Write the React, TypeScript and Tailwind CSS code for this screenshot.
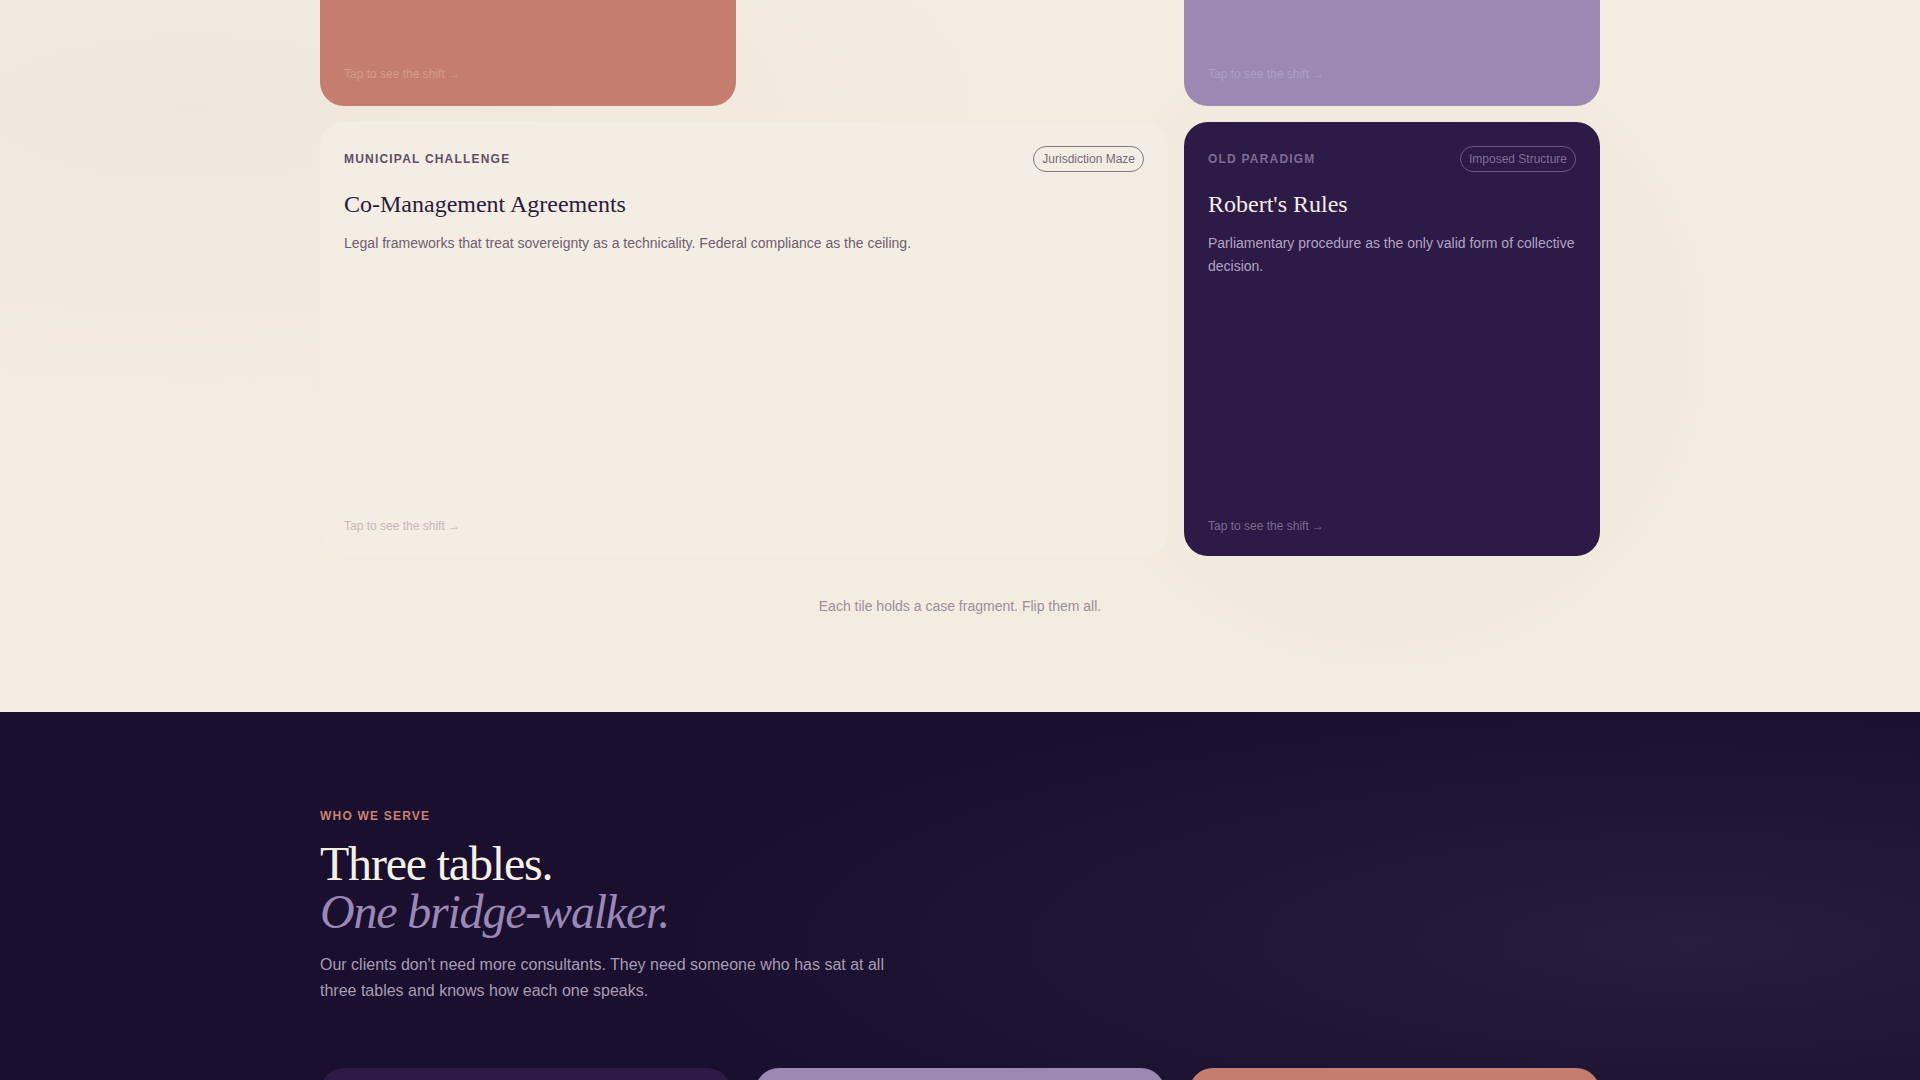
import React from "react";

const serif = { fontFamily: '"Liberation Serif", "Times New Roman", serif' };

type Tile = {
  label: string;
  tag: string;
  title: string;
  body: string;
};

const municipal: Tile = {
  label: "Municipal Challenge",
  tag: "Jurisdiction Maze",
  title: "Co-Management Agreements",
  body: "Legal frameworks that treat sovereignty as a technicality. Federal compliance as the ceiling.",
};

const oldParadigm: Tile = {
  label: "Old Paradigm",
  tag: "Imposed Structure",
  title: "Robert's Rules",
  body: "Parliamentary procedure as the only valid form of collective decision.",
};

function TapHint({ className }: { className: string }) {
  return <span className={`text-xs leading-4 ${className}`}>Tap to see the shift →</span>;
}

function TileCard({ tile, dark, className }: { tile: Tile; dark?: boolean; className?: string }) {
  return (
    <div
      className={`flex h-[434px] flex-col rounded-3xl px-6 pt-6 pb-[19px] ${
        dark ? "bg-[#2d1a46]" : "bg-[#f4ede3] shadow-[0_0_0_1px_#f2eadf]"
      } ${className ?? ""}`}
    >
      <div className="flex items-center justify-between">
        <span
          className={`text-xs font-bold uppercase tracking-widest ${
            dark ? "text-[#7e6d94]" : "text-[#5c4f66]"
          }`}
        >
          {tile.label}
        </span>
        <span
          className={`rounded-full border px-2 py-1 text-xs leading-4 ${
            dark ? "border-[#6a5882] text-[#7f6f95]" : "border-[#857884] text-[#76697a]"
          }`}
        >
          {tile.tag}
        </span>
      </div>
      <h3
        style={serif}
        className={`mt-4 text-2xl leading-8 ${dark ? "text-[#f4ede3]" : "text-[#2a1c3b]"}`}
      >
        {tile.title}
      </h3>
      <p
        className={`mt-3 text-sm leading-relaxed ${
          dark ? "text-[#b2a4c4]" : "text-[#6c6070]"
        }`}
      >
        {tile.body}
      </p>
      <div className="mt-auto">
        <TapHint className={dark ? "text-[#7b6b8f]" : "text-[#c4b8b6]"} />
      </div>
    </div>
  );
}

export default function App() {
  return (
    <div className="min-h-screen" style={{ fontFamily: '"Liberation Sans", Arial, sans-serif' }}>
      {/* ---- Case tiles ---- */}
      <section className="bg-[#f3ece1] bg-[radial-gradient(circle_at_72%_48%,rgba(236,226,211,0.35)_0%,rgba(236,226,211,0.15)_22%,transparent_23%),radial-gradient(ellipse_at_10%_15%,rgba(236,226,212,0.5),transparent_35%)] pb-24">
        <div className="mx-auto w-[1280px]">
          <div className="grid grid-cols-3 gap-4">
            <div className="flex h-[106px] items-end rounded-b-3xl bg-[#c47d6e] px-6 pb-6">
              <TapHint className="text-[#d69b8d]" />
            </div>
            <div />
            <div className="flex h-[106px] items-end rounded-b-3xl bg-[#9b89b4] px-6 pb-6">
              <TapHint className="text-[#ae9fc5]" />
            </div>

            <TileCard tile={municipal} className="col-span-2" />
            <TileCard tile={oldParadigm} dark />
          </div>
          <p className="mt-10 text-center text-sm leading-5 text-[#9b8f99]">
            Each tile holds a case fragment. Flip them all.
          </p>
        </div>
      </section>

      {/* ---- Who we serve ---- */}
      <section className="overflow-hidden bg-[#1a0f2e] bg-[radial-gradient(ellipse_at_88%_35%,rgba(40,30,62,0.9)_0%,rgba(34,24,54,0.6)_25%,transparent_45%)] pt-24">
        <div className="mx-auto w-[1280px]">
          <p className="text-xs font-bold uppercase leading-4 tracking-widest text-[#c9826f]">
            Who We Serve
          </p>
          <h2 style={serif} className="mt-4 text-5xl leading-none tracking-tight text-[#f6efe4]">
            Three tables.
            <br />
            <em className="text-[#9b88b6]">One bridge-walker.</em>
          </h2>
          <p className="mt-4 max-w-xl text-base leading-relaxed text-[#a89db4]">
            Our clients don't need more consultants. They need someone who has sat at all three
            tables and knows how each one speaks.
          </p>
          <div className="mt-16 grid grid-cols-3 gap-6">
            <div className="h-[300px] rounded-3xl bg-[#2d1a46]" />
            <div className="h-[300px] rounded-3xl bg-[#9b89b4]" />
            <div className="h-[300px] rounded-3xl bg-[#c47d6e]" />
          </div>
        </div>
      </section>
    </div>
  );
}
